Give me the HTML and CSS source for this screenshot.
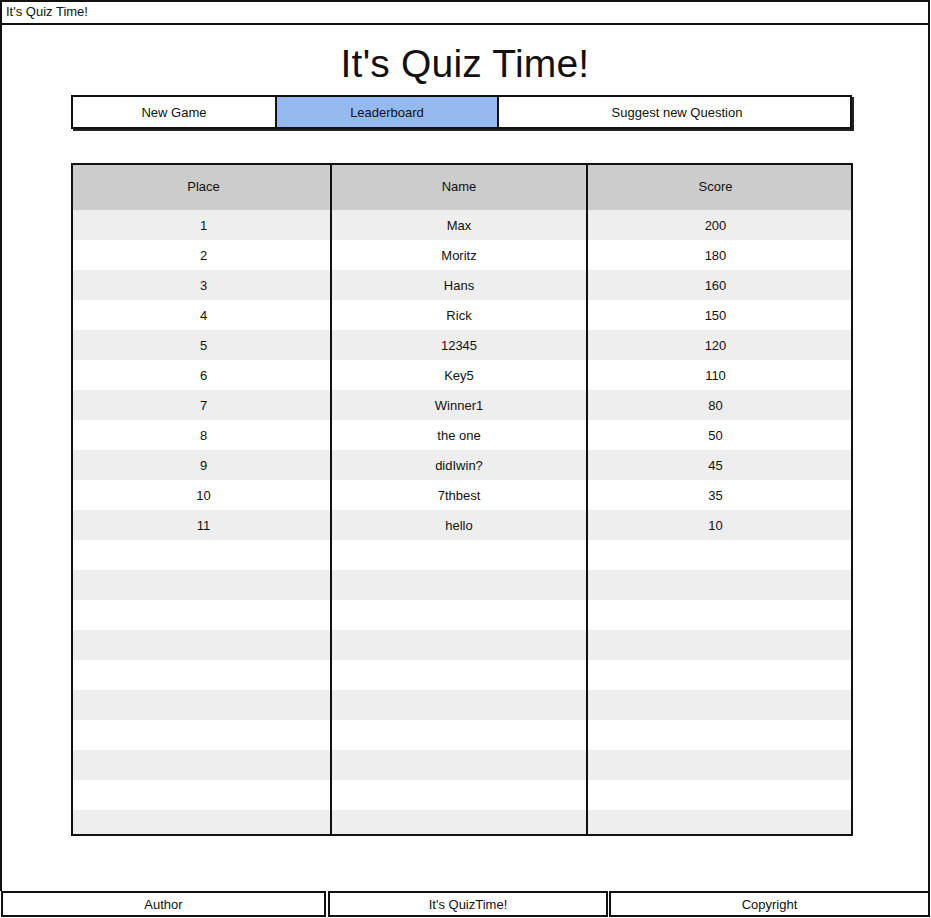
FILE: index.html
```html
<!DOCTYPE html>
<html lang="en">
<head>
<meta charset="utf-8">
<title>It's Quiz Time!</title>
<link rel="stylesheet" href="styles.css">
</head>
<body>
<div class="window">
  <div class="titlebar">It's Quiz Time!</div>
  <div class="main">
    <h1 class="heading">It's Quiz Time!</h1>
    <nav class="tabs">
      <div class="tab tab-new">New Game</div>
      <div class="tab tab-board active">Leaderboard</div>
      <div class="tab tab-suggest">Suggest new Question</div>
    </nav>
    <div class="board">
      <table class="scores">
        <thead>
          <tr><th class="c1">Place</th><th class="c2">Name</th><th class="c3">Score</th></tr>
        </thead>
        <tbody>
          <tr><td>1</td><td>Max</td><td>200</td></tr>
          <tr><td>2</td><td>Moritz</td><td>180</td></tr>
          <tr><td>3</td><td>Hans</td><td>160</td></tr>
          <tr><td>4</td><td>Rick</td><td>150</td></tr>
          <tr><td>5</td><td>12345</td><td>120</td></tr>
          <tr><td>6</td><td>Key5</td><td>110</td></tr>
          <tr><td>7</td><td>Winner1</td><td>80</td></tr>
          <tr><td>8</td><td>the one</td><td>50</td></tr>
          <tr><td>9</td><td>didIwin?</td><td>45</td></tr>
          <tr><td>10</td><td>7thbest</td><td>35</td></tr>
          <tr><td>11</td><td>hello</td><td>10</td></tr>
          <tr><td></td><td></td><td></td></tr>
          <tr><td></td><td></td><td></td></tr>
          <tr><td></td><td></td><td></td></tr>
          <tr><td></td><td></td><td></td></tr>
          <tr><td></td><td></td><td></td></tr>
          <tr><td></td><td></td><td></td></tr>
          <tr><td></td><td></td><td></td></tr>
          <tr><td></td><td></td><td></td></tr>
          <tr><td></td><td></td><td></td></tr>
          <tr><td></td><td></td><td></td></tr>
          <tr><td></td><td></td><td></td></tr>
        </tbody>
      </table>
    </div>
  </div>
  <footer class="footer">
    <div class="fbox f-author">Author</div>
    <div class="fbox f-app">It's QuizTime!</div>
    <div class="fbox f-copy">Copyright</div>
  </footer>
</div>
</body>
</html>
```

FILE: styles.css
```css
* { box-sizing: border-box; }

html, body {
  margin: 0;
  padding: 0;
  background: #fff;
}

body {
  font-family: "Liberation Sans", Arial, sans-serif;
  color: #111;
}

.window {
  width: 931px;
  height: 918px;
  display: flex;
  flex-direction: column;
}

.titlebar {
  width: 930px;
  height: 25px;
  border: 2px solid #111;
  font-size: 13px;
  line-height: 20px;
  padding-left: 4px;
}

.main {
  flex: 1;
  width: 930px;
  border-left: 2px solid #111;
  border-right: 2px solid #111;
  padding: 0 0 0 69px;
}

.heading {
  margin: 20px 0 0 -69px;
  height: 38px;
  text-align: center;
  font-size: 39px;
  line-height: 38px;
  font-weight: normal;
  letter-spacing: 0.2px;
}

.tabs {
  display: flex;
  width: 781px;
  height: 34px;
  margin-top: 12px;
  border: 2px solid #111;
  box-shadow: 2px 2px 0 #222;
}

.tab {
  display: flex;
  align-items: center;
  justify-content: center;
  font-size: 13px;
  background: #fff;
}

.tab-new { width: 202px; }
.tab-board { width: 224px; border-left: 2px solid #111; border-right: 2px solid #111; }
.tab-suggest { flex: 1; padding-left: 5px; }

.tab.active { background: #93b9ee; }

.board {
  margin-top: 34px;
  width: 782px;
  height: 673px;
  border: 2px solid #111;
  overflow: hidden;
}

.scores {
  width: 778px;
  border-collapse: collapse;
  table-layout: fixed;
  font-size: 13px;
}

.scores th {
  height: 45px;
  background: #cccccc;
  font-weight: normal;
  padding: 0 0 2px;
}

.scores td {
  height: 30px;
  padding: 1px 0 0;
  text-align: center;
}

.scores th:first-child,
.scores td:first-child { padding-left: 4px; }

.scores th:last-child,
.scores td:last-child { padding-right: 8px; }

.scores th + th,
.scores td + td {
  border-left: 2px solid #111;
}

.scores .c1 { width: 258px; }
.scores .c2 { width: 256px; }
.scores .c3 { width: auto; }

.scores tbody tr:nth-child(odd) td { background: #eeeeee; }
.scores tbody tr:nth-child(even) td { background: #fff; }

.footer {
  display: flex;
  height: 27px;
  padding-left: 1px;
}

.fbox {
  height: 26px;
  border: 2px solid #111;
  font-size: 13px;
  display: flex;
  align-items: center;
  justify-content: center;
}

.f-author { width: 325px; }
.f-app { width: 280px; margin-left: 2px; }
.f-copy { width: 321px; margin-left: 1px; }
```
